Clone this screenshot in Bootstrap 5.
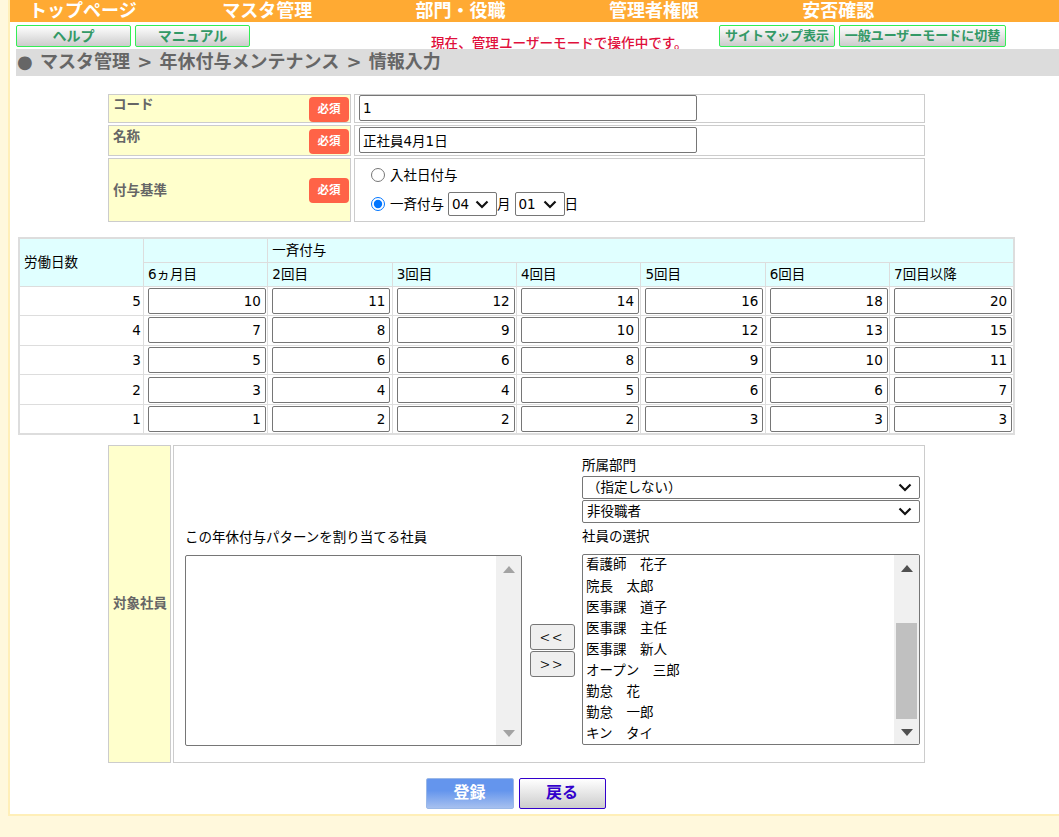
<!DOCTYPE html>
<html lang="ja"><head><meta charset="utf-8"><title>年休付与メンテナンス</title>
<link href="https://cdn.jsdelivr.net/npm/bootstrap@5.3.0/dist/css/bootstrap.min.css" rel="stylesheet">
<style>
html,body{height:100%;overflow:hidden}
body{background:#fff8dc;color:#000;font:13.5px/18px "DejaVu Sans","Noto Sans CJK JP",sans-serif}
.shell{margin-left:8px;height:816px;background:#fff;border:solid #ffefb8;border-width:0 0 2px 2px}
.topnav{height:22px;background:#ffaa33;padding-left:19px;color:#fff;font-weight:700;font-size:18px;line-height:22px;overflow:hidden}
.topnav span{width:193.3px;flex:none}
.subbar{height:27px;padding:3px 6px 0;overflow:hidden}
.gbtn{height:22px;padding:0;border:1px solid #33ee55;border-radius:2px;background:linear-gradient(#fff,#ccc);color:#339966;font-size:14px;line-height:20px;font-weight:700;text-align:center}
.gbtn.slim{font-size:13px}
.w-a{width:115px}.w-s{width:116px}.w-c{width:167px}
.notice{color:#e0103c;font-weight:500;font-size:13.6px;line-height:18px;margin-left:177px;margin-top:9px;width:284px;white-space:nowrap}
.crumb{height:27px;margin-left:6px;background:#dcdcdc;color:#666;font-weight:700;font-size:18px;line-height:25px;padding-left:1px;word-spacing:1px}
.fgrid{width:817px;margin:18px 0 0 98px}
.frow{display:flex;gap:3px;margin-bottom:2px}
.fl{width:243px;flex:none;background:#ffffcc;border:1px solid #ccc;color:#666;font-weight:700;font-size:13.5px;padding:0 1px 0 4px;display:flex;justify-content:space-between}
.fl>span.up{padding-top:1px}
.fv{flex:1;border:1px solid #ccc;padding:1px 4px}
.fv.snug{padding-top:0}
.must{width:40px;height:25px;border-radius:4px;background:#ff6347;color:#fff;font-size:11.5px;font-weight:700;line-height:25px;text-align:center}
.must.dn{margin-top:3px}
.must.dn1{margin-top:2px}
.tinput{display:block;width:338px;height:26px;padding:0 3px;border:1px solid #767676;border-radius:2px;font:inherit;line-height:24px;background:#fff;color:#000}
.radrow{display:flex;align-items:center;padding-left:10px}
.radrow input{width:14px;height:14px;margin:0 5px 0 2px}
.chev{appearance:none;-webkit-appearance:none;background:#fff url("data:image/svg+xml,%3Csvg xmlns='http://www.w3.org/2000/svg' width='14' height='9'%3E%3Cpath d='M1.5 1.5 7 7l5.5-5.5' fill='none' stroke='%23111' stroke-width='2.2'/%3E%3C/svg%3E") no-repeat right 7px center}
.mini{height:24px;font:inherit;border:1px solid #767676;border-radius:2px;padding:0 0 0 3px;margin:0 0 0 4px}
.radbox{padding-top:6px}
.r1{height:20px}
.r2{height:26px;margin-top:6px}
.ggrid{width:997px;margin:15px 0 0 8px;border:2px solid #ddd;table-layout:fixed;border-collapse:collapse;line-height:18px}
.ggrid td{border:1px solid #ddd;padding:0 4px;vertical-align:middle}
.ggrid tr{height:29.6px}
.ggrid tr.hr{height:24px}
.ggrid .hc{background:#e0ffff}
.ggrid .ic{padding:1px 1px 1px 4px}
.ggrid .rn{padding-right:2px;text-align:right}
.ginput{display:block;width:118px;height:26px;text-align:right;padding:0 4px;border:1px solid #767676;border-radius:2px;font:inherit;background:#fff;color:#000}
.tgrid{display:flex;gap:2px;width:817px;margin:10px 0 0 98px;height:318px}
.tl{width:63px;flex:none;background:#ffffcc;border:1px solid #ccc;color:#666;font-weight:700;font-size:13.5px;display:flex;align-items:center;padding:0 0 2px 4px;white-space:nowrap}
.tv{flex:1;border:1px solid #ccc;display:flex;padding:0 4px 0 11px;gap:8px}
.leftcol{width:337px;margin-top:82px}
.midcol{width:45px;flex:none;display:flex;flex-direction:column;margin-top:178px;gap:1px}
.rightcol{width:338px;margin-left:-1px;padding-top:10px}
.deptcap{height:20px}
.cap{height:27px;line-height:18px;margin:0}
.cap.pick{margin-top:4px}
.lbox{height:191px;border:1px solid #767676;border-radius:2px;display:flex;overflow:hidden;background:#fff}
.opts{flex:1;overflow:hidden;padding-left:3px}
.opts div{height:21px;line-height:21px;white-space:pre}
.opts div:first-child{margin-top:-1px;height:22px}
.sbar{width:25px;flex:none;background:#f0f0f0;display:flex;flex-direction:column;align-items:center;padding:10px 0 8px}
.sbar svg{display:block}
.thumb{width:21px;height:96px;background:#c0c0c0;margin-top:51px;margin-bottom:auto}
.arrbtn{height:26px;padding:0;border:1px solid #767676;border-radius:3px;background:#efefef;color:#000;font:300 17.5px/22px "Noto Sans CJK JP",sans-serif;letter-spacing:3px;text-align:center}
.sel{display:block;width:338px;height:23px;font:inherit;border:1px solid #767676;border-radius:2px;padding:0 0 0 4px;margin-bottom:1px}
.acts{margin-top:15px;gap:5px;padding-right:38px}
.sbtn{width:88px;height:31px;padding:0;font-size:16px;font-weight:700;border-radius:2px;line-height:26px}
.sbtn.go{background:linear-gradient(#6495ed 40%,#a6c0ef);border:1px solid #9ab8e8;color:#fff}
.sbtn.back{width:87px;background:linear-gradient(#fff,#ccc);border:1px solid #3300cc;color:#3300cc}
</style></head><body>
<div class="shell">
  <div class="topnav d-flex"><span>トップページ</span><span>マスタ管理</span><span>部門・役職</span><span>管理者権限</span><span>安否確認</span></div>
  <div class="subbar d-flex gap-1">
    <button class="btn gbtn w-a" type="button">ヘルプ</button>
    <button class="btn gbtn w-a" type="button">マニュアル</button>
    <div class="notice">現在、管理ユーザーモードで操作中です。</div>
    <button class="btn gbtn slim w-s" type="button">サイトマップ表示</button>
    <button class="btn gbtn slim w-c" type="button">一般ユーザーモードに切替</button>
  </div>
  <div class="crumb">● マスタ管理 &gt; 年休付与メンテナンス &gt; 情報入力</div>

  <div class="fgrid">
    <div class="frow" style="height:29px"><div class="fl"><span>コード</span><div class="must dn1">必須</div></div><div class="fv snug"><input class="tinput" value="1"></div></div>
    <div class="frow" style="height:31px"><div class="fl"><span class="up">名称</span><div class="must dn">必須</div></div><div class="fv"><input class="tinput" value="正社員4月1日"></div></div>
    <div class="frow" style="height:64px"><div class="fl align-items-center"><span>付与基準</span><div class="must">必須</div></div>
      <div class="fv radbox">
        <label class="radrow r1"><input type="radio" name="k">入社日付与</label>
        <label class="radrow r2"><input type="radio" name="k" checked>一斉付与<select class="mini chev" style="width:49px"><option>04</option></select>月<select class="mini chev" style="width:50px"><option>01</option></select>日</label>
      </div>
    </div>
  </div>

  <table class="ggrid">
    <colgroup><col style="width:124.4px"><col span="7" style="width:124.3px"></colgroup>
    <tr class="hr"><td class="hc" rowspan="2">労働日数</td><td class="hc"></td><td class="hc" colspan="6">一斉付与</td></tr>
    <tr class="hr"><td class="hc">6ヵ月目</td><td class="hc">2回目</td><td class="hc">3回目</td><td class="hc">4回目</td><td class="hc">5回目</td><td class="hc">6回目</td><td class="hc">7回目以降</td></tr>
    <tr><td class="rn">5</td><td class="ic"><input class="ginput" value="10"></td><td class="ic"><input class="ginput" value="11"></td><td class="ic"><input class="ginput" value="12"></td><td class="ic"><input class="ginput" value="14"></td><td class="ic"><input class="ginput" value="16"></td><td class="ic"><input class="ginput" value="18"></td><td class="ic"><input class="ginput" value="20"></td></tr>
    <tr><td class="rn">4</td><td class="ic"><input class="ginput" value="7"></td><td class="ic"><input class="ginput" value="8"></td><td class="ic"><input class="ginput" value="9"></td><td class="ic"><input class="ginput" value="10"></td><td class="ic"><input class="ginput" value="12"></td><td class="ic"><input class="ginput" value="13"></td><td class="ic"><input class="ginput" value="15"></td></tr>
    <tr><td class="rn">3</td><td class="ic"><input class="ginput" value="5"></td><td class="ic"><input class="ginput" value="6"></td><td class="ic"><input class="ginput" value="6"></td><td class="ic"><input class="ginput" value="8"></td><td class="ic"><input class="ginput" value="9"></td><td class="ic"><input class="ginput" value="10"></td><td class="ic"><input class="ginput" value="11"></td></tr>
    <tr><td class="rn">2</td><td class="ic"><input class="ginput" value="3"></td><td class="ic"><input class="ginput" value="4"></td><td class="ic"><input class="ginput" value="4"></td><td class="ic"><input class="ginput" value="5"></td><td class="ic"><input class="ginput" value="6"></td><td class="ic"><input class="ginput" value="6"></td><td class="ic"><input class="ginput" value="7"></td></tr>
    <tr><td class="rn">1</td><td class="ic"><input class="ginput" value="1"></td><td class="ic"><input class="ginput" value="2"></td><td class="ic"><input class="ginput" value="2"></td><td class="ic"><input class="ginput" value="2"></td><td class="ic"><input class="ginput" value="3"></td><td class="ic"><input class="ginput" value="3"></td><td class="ic"><input class="ginput" value="3"></td></tr>
  </table>

  <div class="tgrid">
    <div class="tl">対象社員</div>
    <div class="tv">
      <div class="leftcol">
        <p class="cap">この年休付与パターンを割り当てる社員</p>
        <div class="lbox"><div class="opts"></div>
          <div class="sbar"><svg width="12" height="7" viewBox="0 0 12 7"><path d="M6 0 12 7H0z" fill="#a3a3a3"/></svg><div class="thumb invisible"></div><svg width="12" height="7" viewBox="0 0 12 7"><path d="M0 0H12L6 7z" fill="#a3a3a3"/></svg></div>
        </div>
      </div>
      <div class="midcol">
        <button class="btn arrbtn" type="button">&lt;&lt;</button>
        <button class="btn arrbtn" type="button">&gt;&gt;</button>
      </div>
      <div class="rightcol">
        <div class="deptcap">所属部門</div>
        <select class="sel chev"><option>（指定しない）</option></select>
        <select class="sel chev"><option>非役職者</option></select>
        <p class="cap pick">社員の選択</p>
        <div class="lbox"><div class="opts">
          <div>看護師　花子</div><div>院長　太郎</div><div>医事課　道子</div><div>医事課　主任</div><div>医事課　新人</div><div>オープン　三郎</div><div>勤怠　花</div><div>勤怠　一郎</div><div>キン　タイ</div>
        </div>
          <div class="sbar"><svg width="12" height="7" viewBox="0 0 12 7"><path d="M6 0 12 7H0z" fill="#505050"/></svg><div class="thumb"></div><svg width="12" height="7" viewBox="0 0 12 7"><path d="M0 0H12L6 7z" fill="#505050"/></svg></div>
        </div>
      </div>
    </div>
  </div>

  <div class="d-flex justify-content-center acts">
    <button class="btn sbtn go" type="button">登録</button>
    <button class="btn sbtn back" type="button">戻る</button>
  </div>
</div>
<script src="https://cdn.jsdelivr.net/npm/bootstrap@5.3.0/dist/js/bootstrap.bundle.min.js"></script>
</body></html>
